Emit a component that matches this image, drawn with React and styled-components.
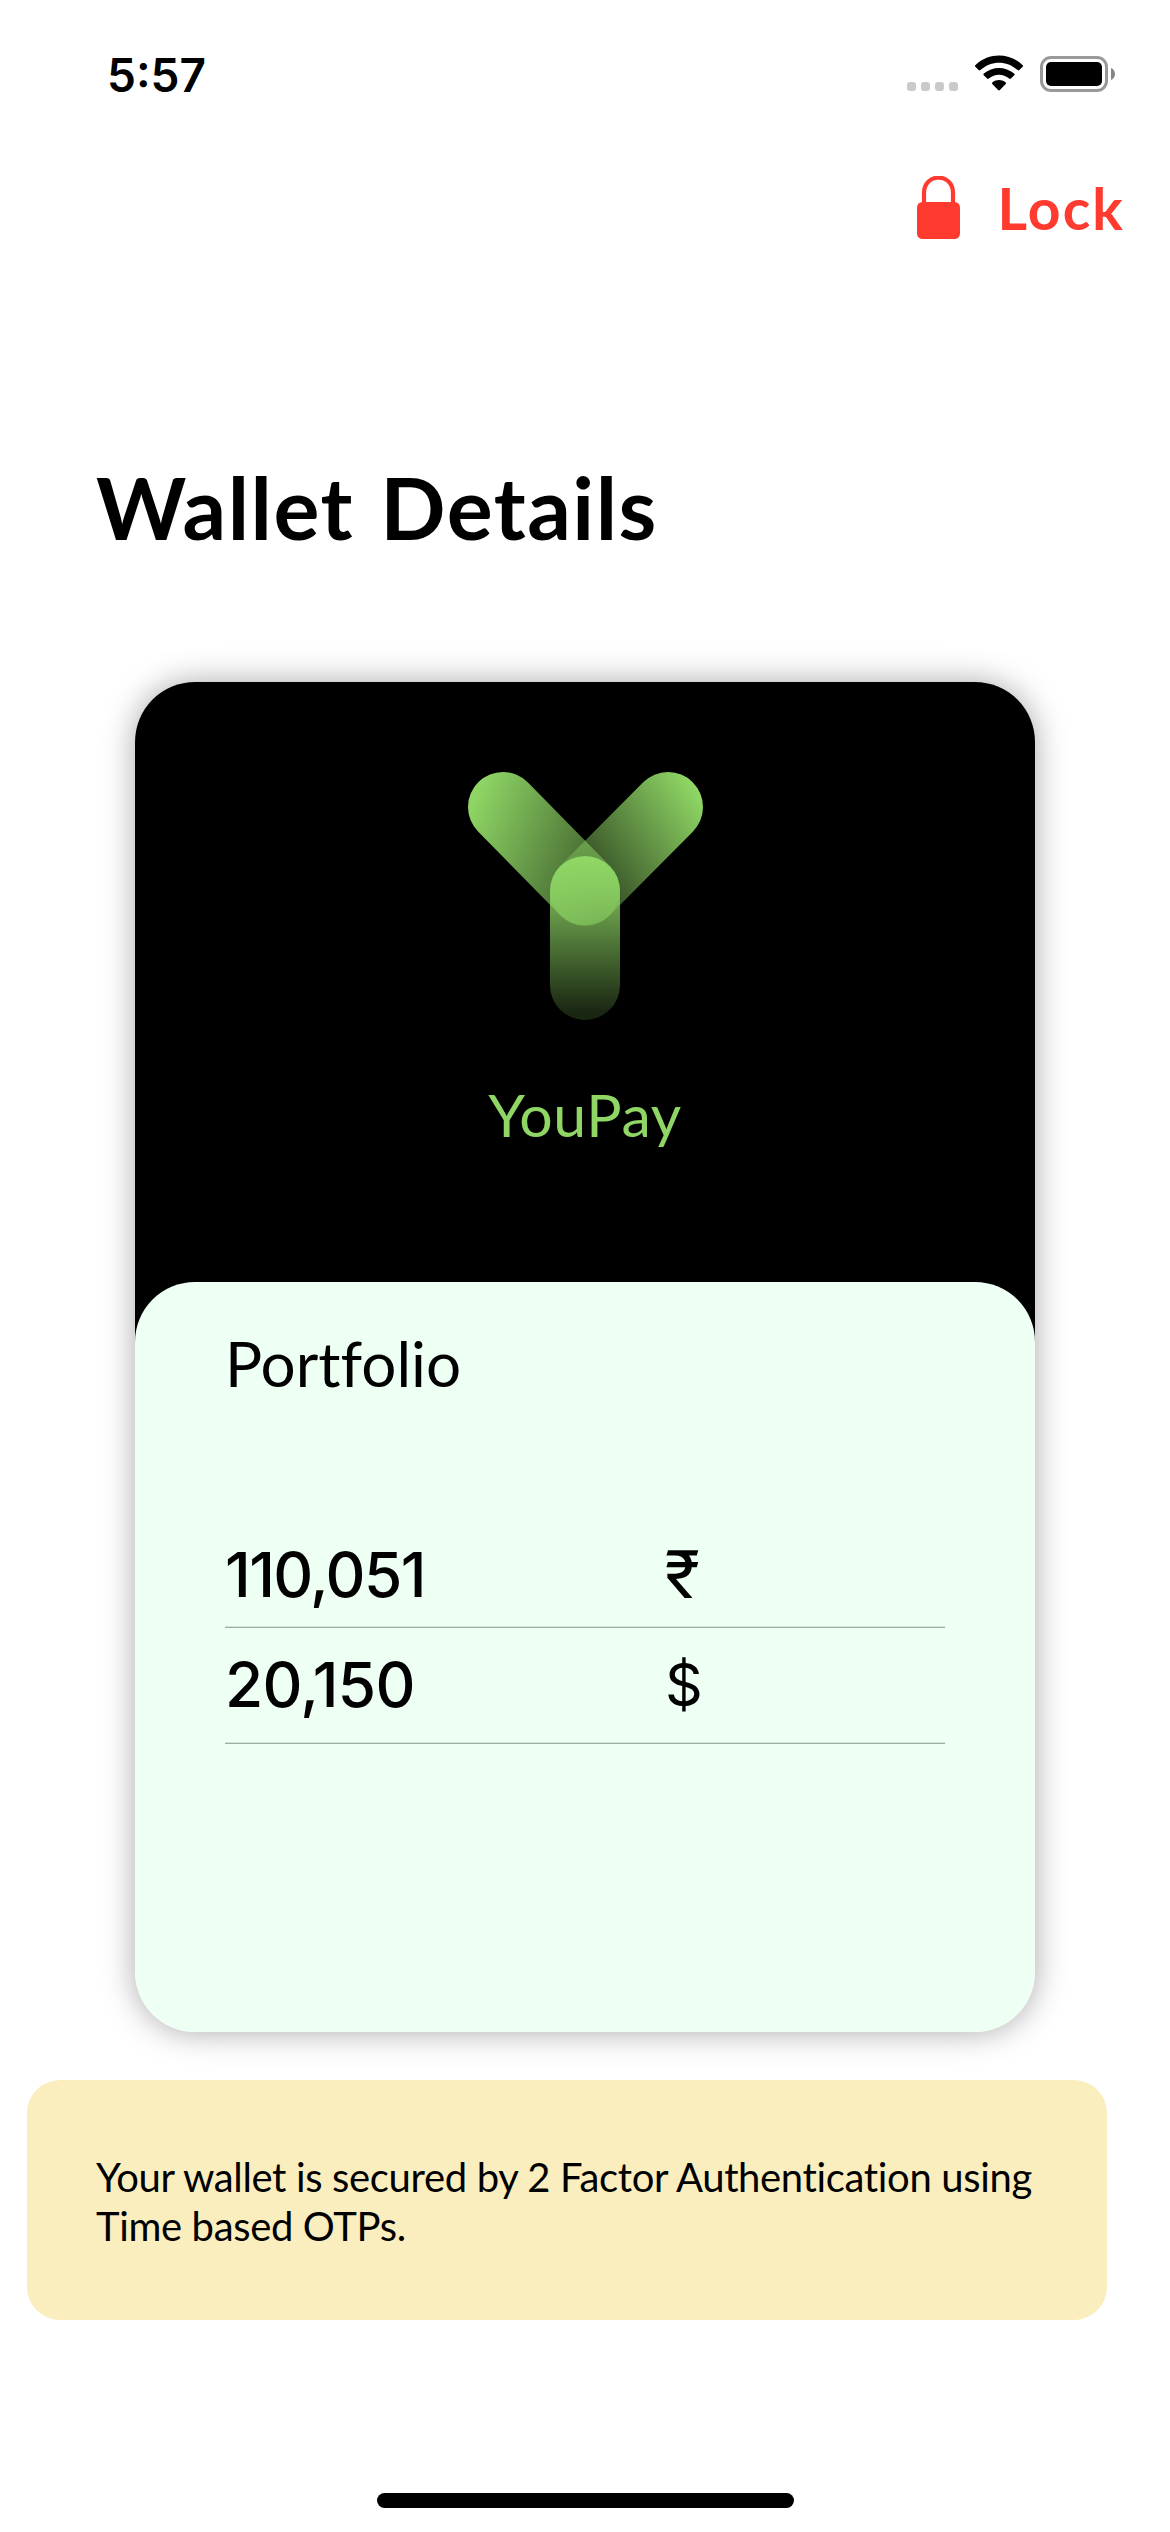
import React from "react";
import styled, { createGlobalStyle } from "styled-components";

const GlobalStyle = createGlobalStyle`
  body { margin: 0; background: #fff; }
  * { box-sizing: border-box; }
`;

const Screen = styled.main`
  width: 1170px;
  height: 2532px;
  display: flex;
  flex-direction: column;
  background: #fff;
  color: #000;
  font-family: Lato, "Open Sans", sans-serif;
  font-variant-ligatures: none;
  overflow: hidden;
`;

const StatusBar = styled.header`
  height: 141px;
  flex: none;
  display: flex;
  justify-content: space-between;
  align-items: flex-start;
  padding: 55px 55px 0 107px;
`;

const Clock = styled.time`
  font: 600 46px/40px Inter, sans-serif;
  letter-spacing: 0;
  white-space: nowrap;
`;

const StatusIcons = styled.div`
  display: flex;
  height: 38px;
`;

const Toolbar = styled.div`
  height: 132px;
  flex: none;
  display: flex;
  justify-content: flex-end;
  padding: 35px 45px 0 0;
`;

const LockButton = styled.button`
  display: flex;
  gap: 36px;
  height: 64px;
  border: 0;
  padding: 0;
  background: none;
  color: #ff3b30;
  font: 700 57px/64px Lato, sans-serif;
  letter-spacing: 2.2px;
  white-space: nowrap;
`;

const Title = styled.h1`
  margin: 182px 0 123px 96px;
  font-size: 86px;
  line-height: 104px;
  font-weight: 700;
  letter-spacing: 1.5px;
  word-spacing: 4px;
  white-space: nowrap;
`;

const Card = styled.section`
  width: 900px;
  height: 1350px;
  flex: none;
  margin: 0 auto;
  border-radius: 60px;
  overflow: hidden;
  box-shadow: 0 0 32px rgba(0, 0, 0, 0.34);
`;

const Hero = styled.div`
  height: 665px;
  display: flex;
  flex-direction: column;
  align-items: center;
  gap: 59px;
  padding-top: 90px;
  background: #000;
`;

const Brand = styled.div`
  color: #8fd665;
  font-size: 59px;
  line-height: 72px;
  letter-spacing: 0.6px;
  white-space: nowrap;
`;

const Panel = styled.div`
  height: 750px;
  margin-top: -65px;
  padding: 43px 90px 0;
  border-radius: 60px;
  background: #eefff3;
`;

const PanelTitle = styled.h2`
  margin: 0 0 117px 0;
  font-size: 62px;
  line-height: 76px;
  font-weight: 400;
  white-space: nowrap;
`;

const Balance = styled.div`
  display: grid;
  grid-template-columns: 440px 1fr;
  padding: 19px 0 ${(p) => p.$below}px 0;
  border-bottom: 1px solid #9fada4;
  box-shadow: inset 0 -1px #d3e3da;
  line-height: 76px;
  white-space: nowrap;
`;

const Amount = styled.span`
  font-family: Inter, sans-serif;
  font-size: 62px;
  font-weight: 500;
  letter-spacing: ${(p) => p.$track}px;
`;

const Currency = styled.span`
  height: 76px;
  font-family: ${(p) => p.$family}, sans-serif;
  font-size: ${(p) => p.$size}px;
  font-weight: ${(p) => p.$weight};
`;

const Notice = styled.aside`
  width: 1080px;
  height: 240px;
  flex: none;
  margin: 48px 0 0 27px;
  padding: 73px 60px 0 69px;
  border-radius: 33px;
  background: #faeebf;
`;

const NoticeLine = styled.p`
  margin: 0;
  font-size: 40px;
  line-height: 49px;
  letter-spacing: ${(p) => p.$track}px;
  white-space: nowrap;
`;

const HomeIndicator = styled.div`
  width: 417px;
  height: 15px;
  flex: none;
  margin: auto auto 24px;
  border-radius: 8px;
  background: #000;
`;

const StatusGlyphs = () => (
  <svg width="208" height="38" viewBox="907 55 208 38">
    {[907, 921, 935, 949].map((x) => (
      <rect key={x} x={x} y="82" width="9" height="9" rx="3" fill="#cacaca" />
    ))}
    <path d="M975.4 66.8Q974.5 65.8 975.5 64.9C989 52.4 1009 52.4 1022.5 64.9Q1023.5 65.8 1022.6 66.8L1019.4 70Q1018.6 70.8 1017.7 70C1006.500 60.2 991.500 60.2 980.300 70Q979.400 70.8 978.600 70Z" />
    <path d="M983.700 75.300Q982.900 74.500 983.800 73.600C992.500 66 1005.500 66 1014.200 73.600Q1015.100 74.500 1014.300 75.300L1010.900 78.600Q1010.100 79.400 1009.200 78.600C1003.200 73.500 994.800 73.500 988.800 78.600Q987.900 79.400 987.100 78.600Z" />
    <path d="M992.300 83.900Q991.500 83 992.500 82.200C996.300 79.300 1001.700 79.300 1005.500 82.200Q1006.500 83 1005.700 83.900L999.900 90.100Q999 91 998.100 90.100Z" />
    <rect x="1041.500" y="57.500" width="65" height="33" rx="9.500" fill="none" stroke="#999" strokeWidth="3" />
    <rect x="1046" y="62" width="56" height="24" rx="5" />
    <path d="M1111 68c5.300 2.200 5.300 9.800 0 12Z" fill="#858585" />
  </svg>
);

const Padlock = () => (
  <svg width="44" height="64" viewBox="915 176 44 64">
    <path d="M922 204V193C922 172.500 951 172.500 951 193V204" fill="none" stroke="#ff3b30" strokeWidth="4.200" />
    <rect x="915" y="202" width="43" height="37" rx="5.500" fill="#ff3b30" />
  </svg>
);

const Logo = () => (
  <svg width="235" height="248" viewBox="468 772 235 248">
    <defs>
      <linearGradient id="leftArm" gradientUnits="userSpaceOnUse" x1="475" y1="795" x2="640" y2="865">
        <stop offset="0" stopColor="#8fd665" />
        <stop offset="1" stopColor="#8fd665" stopOpacity="0.32" />
      </linearGradient>
      <linearGradient id="rightArm" gradientUnits="userSpaceOnUse" x1="694" y1="788" x2="570" y2="870">
        <stop offset="0" stopColor="#8fd665" />
        <stop offset="1" stopColor="#8fd665" stopOpacity="0.3" />
      </linearGradient>
      <linearGradient id="stem" gradientUnits="userSpaceOnUse" x1="585" y1="860" x2="585" y2="1012">
        <stop offset="0" stopColor="#8fd665" />
        <stop offset="1" stopColor="#8fd665" stopOpacity="0.18" />
      </linearGradient>
    </defs>
    <g fill="none" strokeWidth="70" strokeLinecap="round">
      <path d="M668 807L585 890.500" stroke="url(#rightArm)" />
      <path d="M503 807L585 890.500" stroke="url(#leftArm)" />
    </g>
    <rect x="550" y="856" width="70" height="164" rx="35" fill="url(#stem)" />
  </svg>
);

export default function App() {
  return (
    <>
      <GlobalStyle />
      <Screen>
        <StatusBar>
          <Clock>5:57</Clock>
          <StatusIcons>
            <StatusGlyphs />
          </StatusIcons>
        </StatusBar>
        <Toolbar>
          <LockButton>
            <Padlock />
            <span>Lock</span>
          </LockButton>
        </Toolbar>
        <Title>Wallet Details</Title>
        <Card>
          <Hero>
            <Logo />
            <Brand>YouPay</Brand>
          </Hero>
          <Panel>
            <PanelTitle>Portfolio</PanelTitle>
            <Balance $below={14}>
              <Amount $track={-1.6}>110,051</Amount>
              <Currency $family="Roboto" $size={67} $weight={400}>₹</Currency>
            </Balance>
            <Balance $below={20}>
              <Amount $track={-0.7}>20,150</Amount>
              <Currency $family="Inter" $size={59} $weight={400}>$</Currency>
            </Balance>
          </Panel>
        </Card>
        <Notice>
          <NoticeLine $track={-0.35}>Your wallet is secured by 2 Factor Authentication using</NoticeLine>
          <NoticeLine $track={-0.35}>Time based OTPs.</NoticeLine>
        </Notice>
        <HomeIndicator />
      </Screen>
    </>
  );
}
